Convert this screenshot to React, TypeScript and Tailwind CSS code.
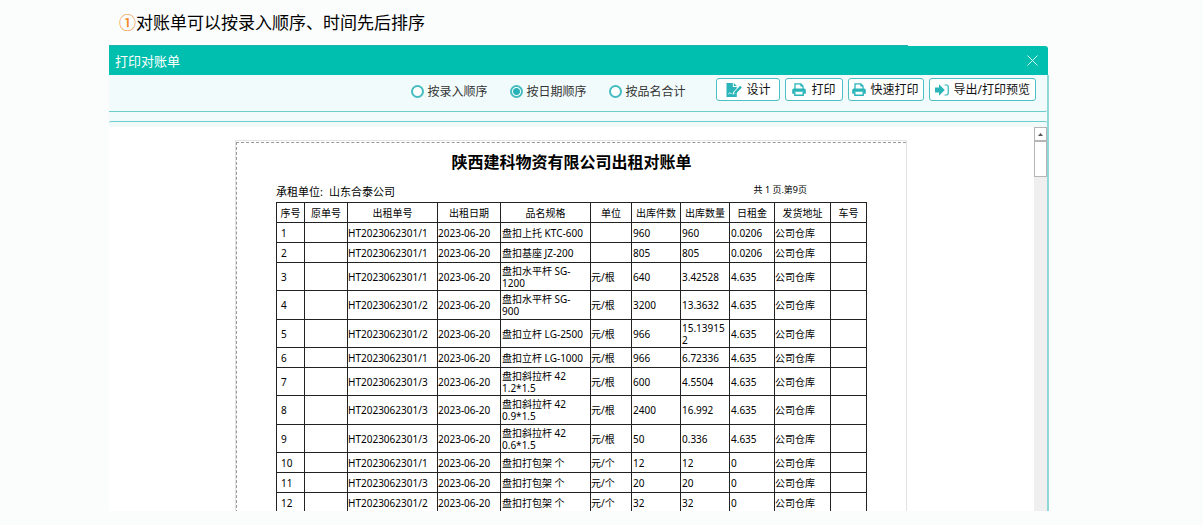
import type { ReactNode } from "react";

type Row = {
  order: string;
  spec: string;
  unit: string;
  pieces: string;
  quantity: string;
  rent: string;
  height: string;
};

const SHORT = "h-5";
const TALL = "h-7";
const TALLER = "h-[29px]";

const rows: Row[] = [
  { order: "HT2023062301/1", spec: "盘扣上托 KTC-600", unit: "", pieces: "960", quantity: "960", rent: "0.0206", height: SHORT },
  { order: "HT2023062301/1", spec: "盘扣基座 JZ-200", unit: "", pieces: "805", quantity: "805", rent: "0.0206", height: SHORT },
  { order: "HT2023062301/1", spec: "盘扣水平杆 SG-\n1200", unit: "元/根", pieces: "640", quantity: "3.42528", rent: "4.635", height: TALL },
  { order: "HT2023062301/2", spec: "盘扣水平杆 SG-\n900", unit: "元/根", pieces: "3200", quantity: "13.3632", rent: "4.635", height: TALLER },
  { order: "HT2023062301/2", spec: "盘扣立杆 LG-2500", unit: "元/根", pieces: "966", quantity: "15.13915\n2", rent: "4.635", height: TALL },
  { order: "HT2023062301/1", spec: "盘扣立杆 LG-1000", unit: "元/根", pieces: "966", quantity: "6.72336", rent: "4.635", height: SHORT },
  { order: "HT2023062301/3", spec: "盘扣斜拉杆 42\n1.2*1.5", unit: "元/根", pieces: "600", quantity: "4.5504", rent: "4.635", height: TALL },
  { order: "HT2023062301/3", spec: "盘扣斜拉杆 42\n0.9*1.5", unit: "元/根", pieces: "2400", quantity: "16.992", rent: "4.635", height: TALLER },
  { order: "HT2023062301/3", spec: "盘扣斜拉杆 42\n0.6*1.5", unit: "元/根", pieces: "50", quantity: "0.336", rent: "4.635", height: TALL },
  { order: "HT2023062301/1", spec: "盘扣打包架 个", unit: "元/个", pieces: "12", quantity: "12", rent: "0", height: SHORT },
  { order: "HT2023062301/3", spec: "盘扣打包架 个", unit: "元/个", pieces: "20", quantity: "20", rent: "0", height: SHORT },
  { order: "HT2023062301/2", spec: "盘扣打包架 个", unit: "元/个", pieces: "32", quantity: "32", rent: "0", height: SHORT },
];

const columns = [
  { title: "序号", width: "w-[28px]" },
  { title: "原单号", width: "w-[43px]" },
  { title: "出租单号", width: "w-[90px]" },
  { title: "出租日期", width: "w-[63px]" },
  { title: "品名规格", width: "w-[90px]" },
  { title: "单位", width: "w-[41px]" },
  { title: "出库件数", width: "w-[49px]" },
  { title: "出库数量", width: "w-[49px]" },
  { title: "日租金", width: "w-[45px]" },
  { title: "发货地址", width: "w-[56px]" },
  { title: "车号", width: "w-[36px]" },
];

function DesignIcon() {
  return (
    <svg viewBox="0 0 16 14" className="h-[14px] w-4" fill="#2bb5b8" aria-hidden="true">
      <path d="M.5 0h6.300v4h4v1.200L7.200 9l-.7 2.600 2.700-.5L10.800 9.600V14H.5z" />
      <path d="M7.800 0l3 3h-3z" />
      <path d="M14.200 2.800l1.700 1.700-5.700 5.900-2.400.7.700-2.400z" />
      <path d="M2.300 11.300c1-2 1.700-2 2-.8.4-.7.900-.5 1.300.2" fill="none" stroke="#fff" strokeWidth=".8" />
    </svg>
  );
}

function PrintIcon() {
  return (
    <svg viewBox="0 0 14 13" className="h-[13px] w-[14px]" aria-hidden="true">
      <path d="M3 6V.8h5.800l2.200 2.200V6" fill="none" stroke="#2bb5b8" strokeWidth="1.300" />
      <path d="M8.300.5v3h3z" fill="#2bb5b8" />
      <path d="M1.800 5.500h10.400q1.600 0 1.600 1.600v3.700h-2.300V8.800h-9v2H.2V7.100q0-1.600 1.600-1.600z" fill="#2bb5b8" />
      <path d="M2.800 8.800v3.500h8.400V8.800" fill="none" stroke="#2bb5b8" strokeWidth="1.400" />
    </svg>
  );
}

function ExportIcon() {
  return (
    <svg viewBox="0 0 14 12" className="h-3 w-[14px]" aria-hidden="true">
      <path d="M0 3.600h4V.3L9.800 6 4 11.700V8.400H0z" fill="#2bb5b8" />
      <path d="M9.500 1h2q1.700 0 1.700 1.700v6.600q0 1.700-1.700 1.700h-2" fill="none" stroke="#2bb5b8" strokeWidth="1.200" />
    </svg>
  );
}

function ToolButton({ icon, children, padding }: { icon: ReactNode; children: ReactNode; padding: string }) {
  return (
    <button
      type="button"
      className={`flex h-[23px] items-center rounded-[3px] border border-[#4dc0c3] bg-white text-[12px] leading-4 text-[#111] ${padding}`}
    >
      {icon}
      <span>{children}</span>
    </button>
  );
}

function SortOption({ label, checked }: { label: string; checked?: boolean }) {
  return (
    <label className="flex items-center gap-[3px] text-[12px] leading-4 text-[#333]">
      <input
        type="radio"
        name="sort"
        defaultChecked={checked}
        className="size-[13px] appearance-none rounded-full border-2 border-[#45bcc0] bg-white checked:bg-[radial-gradient(circle,#27b3b7_3px,#fff_4px)]"
      />
      {label}
    </label>
  );
}

export default function App() {
  return (
    <main className="flex h-screen flex-col bg-[#fbfdfc] pr-[154px] pb-[14px] pl-[109px] font-['Noto_Sans','Noto_Sans_CJK_SC',sans-serif]">
      <h1 className="flex h-[45px] shrink-0 items-center pl-[10px] text-[17px] leading-6 text-black">
        <span className="font-medium text-[#f08a2c]">①</span>对账单可以按录入顺序、时间先后排序
      </h1>

      <section className="flex min-h-0 flex-1 flex-col">
        <div className="h-px w-[85%] shrink-0 bg-[#1fb3ab]" />
        <header className="mr-px flex h-[29px] shrink-0 items-center justify-between rounded-tr-[3px] bg-[#00bfae] pr-[10px] pl-[6px] text-white">
          <h2 className="text-[13px] leading-5">打印对账单</h2>
          <button type="button" aria-label="关闭" className="flex">
            <svg viewBox="0 0 11 11" className="size-[11px]" stroke="#d5f5f2" aria-hidden="true">
              <path d="M.5.5l10 10M10.500.5l-10 10" />
            </svg>
          </button>
        </header>

        <div className="flex min-h-0 flex-1 flex-col border-r-2 border-[#8ed9d8] bg-[#f2fbfc]">
          <div className="flex h-[37px] shrink-0 items-start justify-end rounded-br-[2px] border-b border-[#6cccce] pt-[3px] pr-[11px]">
            <fieldset className="mr-[31px] flex h-[27px] items-center gap-[23px]">
              <SortOption label="按录入顺序" />
              <SortOption label="按日期顺序" checked />
              <SortOption label="按品名合计" />
            </fieldset>
            <div className="flex gap-[5px]">
              <ToolButton icon={<DesignIcon />} padding="gap-1 pr-2 pl-[9px]">设计</ToolButton>
              <ToolButton icon={<PrintIcon />} padding="gap-[6px] px-[6px]">打印</ToolButton>
              <ToolButton icon={<PrintIcon />} padding="gap-[5px] pr-1 pl-[3px]">快速打印</ToolButton>
              <ToolButton icon={<ExportIcon />} padding="gap-[5px] px-[5px]">导出/打印预览</ToolButton>
            </div>
          </div>

          <div className="mt-[9px] flex min-h-0 flex-1 flex-col rounded-t-[2px] border-t border-[#6cccce] pt-[5px]">
            <div className="flex min-h-0 flex-1 bg-white">
              <div className="min-w-0 flex-1 overflow-hidden pt-[13px] pr-px">
                <article className="mx-auto w-[672px] border border-b-0 border-[#e2e2e2] pt-px text-black">
                  <div className="border-t border-l border-dashed border-[#999] px-[39px] pt-[7px]">
                    <h3 className="text-center text-[16px] leading-6 font-bold">陕西建科物资有限公司出租对账单</h3>
                    <div className="flex h-7 items-end justify-between pr-[60px] pb-[2px]">
                      <p className="flex gap-[6px] text-[11px] leading-4">
                        <span>承租单位:</span>
                        <span>山东合泰公司</span>
                      </p>
                      <p className="pb-1 text-[9px] leading-3">共 1 页.第9页</p>
                    </div>
                    <table className="w-[590px] table-fixed border-collapse text-[10px] leading-3">
                      <thead>
                        <tr className="h-5">
                          {columns.map((column) => (
                            <th key={column.title} className={`border border-[#222] p-0 font-normal whitespace-nowrap ${column.width}`}>
                              {column.title}
                            </th>
                          ))}
                        </tr>
                      </thead>
                      <tbody>
                        {rows.map((row, index) => (
                          <tr key={index} className={`whitespace-pre *:border *:border-[#222] *:py-0 ${row.height}`}>
                            <td className="px-1">{index + 1}</td>
                            <td />
                            <td>{row.order}</td>
                            <td>2023-06-20</td>
                            <td className="pl-px">{row.spec}</td>
                            <td>{row.unit}</td>
                            <td className="pl-px">{row.pieces}</td>
                            <td className="pl-px">{row.quantity}</td>
                            <td className="pl-px">{row.rent}</td>
                            <td>公司仓库</td>
                            <td />
                          </tr>
                        ))}
                      </tbody>
                    </table>
                  </div>
                </article>
              </div>

              <div className="flex w-[13px] shrink-0 flex-col bg-[#efefef]" aria-hidden="true">
                <div className="flex h-[14px] items-center justify-center border border-[#b5b5b5] bg-white">
                  <svg viewBox="0 0 5 3" className="h-[3px] w-[5px]" fill="#555">
                    <path d="M2.500 0L5 3H0z" />
                  </svg>
                </div>
                <div className="h-[36px] border border-[#b5b5b5] bg-white" />
              </div>
            </div>
          </div>
        </div>
      </section>
    </main>
  );
}
